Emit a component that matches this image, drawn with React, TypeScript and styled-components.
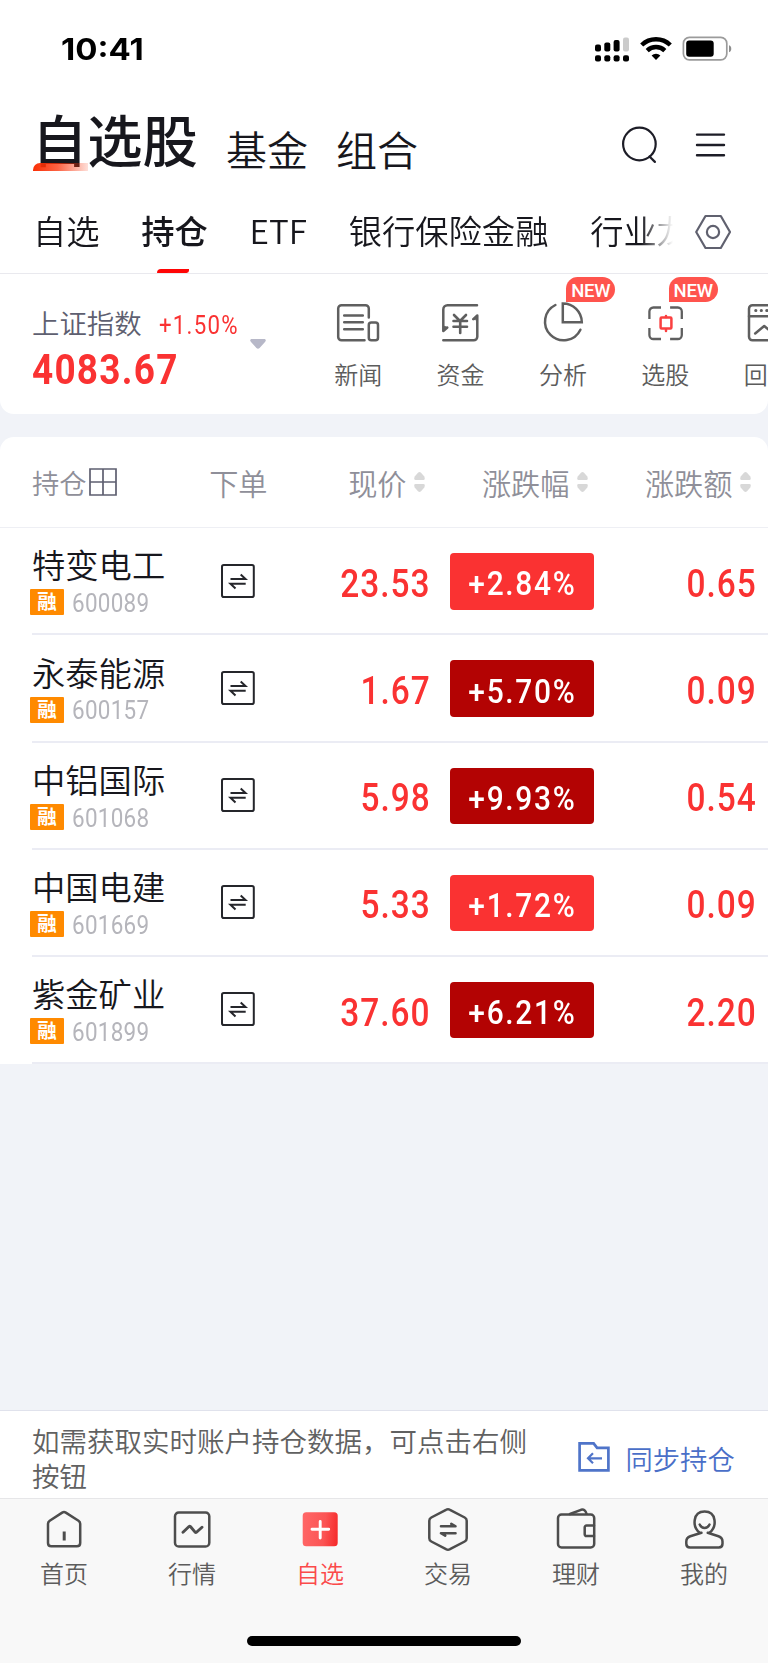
import React from 'react';
import styled, { createGlobalStyle } from 'styled-components';

const CJK = `"Noto Sans CJK SC", sans-serif`;
const DIGITS = `Roboto, "Liberation Sans", sans-serif`;
const RED = '#fa3232';
const DEEP_RED = '#b30303';

const GlobalStyle = createGlobalStyle`
  *, *::before, *::after { box-sizing: border-box; }
  body {
    margin: 0;
    background: #f1f3f8;
    font-family: ${CJK};
    font-weight: 350;
    color: #17171d;
  }
  svg { display: block; flex: none; overflow: visible; }
`;

const Screen = styled.div`
  width: 768px;
  height: 1663px;
  display: flex;
  flex-direction: column;
  overflow: hidden;
  background: #f1f3f8;
`;

/* Condensed figures for prices and percentages */
const Figure = styled.span<{ $size: number; $weight?: number; $color?: string; $align?: 'left' | 'right' | 'center'; $stretch?: number; $gap?: number }>`
  display: inline-block;
  font-family: ${DIGITS};
  font-size: ${p => p.$size}px;
  font-weight: ${p => p.$weight ?? 500};
  color: ${p => p.$color ?? RED};
  line-height: 1;
  white-space: nowrap;
  letter-spacing: ${p => p.$gap ?? 1.4}px;
  margin-right: -${p => p.$gap ?? 1.4}px;
  transform: scaleX(${p => p.$stretch ?? 0.88});
  transform-origin: ${p => p.$align ?? 'left'} center;
`;

const StatusBar = styled.header`
  height: 98px;
  flex: none;
  padding: 0 36px 0 61px;
  display: flex;
  align-items: center;
  justify-content: space-between;
  background: #fff;
`;

const Clock = styled.time`
  font: 700 30px/1 Inter, sans-serif;
  color: #000;
  transform: scaleX(1.1);
  transform-origin: left center;
`;

const StatusIcons = styled.div`
  display: flex;
  align-items: center;
  gap: 11px;
`;

const TitleBar = styled.div`
  height: 95px;
  flex: none;
  padding: 0 43px 4px 32px;
  display: flex;
  align-items: center;
  background: #fff;
`;

const Title = styled.h1`
  position: relative;
  margin: 0;
  font-size: 55.3px;
  line-height: 80px;
  font-weight: 500;
  padding-bottom: 12px;
`;

const TitleMark = styled.i`
  position: absolute;
  left: 1px;
  bottom: 18.5px;
  width: 55px;
  height: 8px;
  border-radius: 7px 0 0 0;
  background: linear-gradient(90deg, #fa2f05 0%, rgba(250, 47, 5, 0.75) 45%, rgba(250, 47, 5, 0.15) 100%);
`;

const SubTitle = styled.span`
  margin-left: 28px;
  font-size: 41px;
  line-height: 60px;
  font-weight: 350;
  padding-top: 8px;
`;

const TitleActions = styled.div`
  margin-left: auto;
  padding-top: 3px;
  display: flex;
  align-items: center;
  gap: 39px;
`;

const TabStrip = styled.nav`
  height: 81px;
  flex: none;
  display: flex;
  align-items: center;
  padding-left: 33px;
  background: #fff;
  border-bottom: 1px solid #e9e9ee;
`;

const TabList = styled.div`
  width: 640px;
  height: 80px;
  overflow: hidden;
  display: flex;
  align-items: center;
  gap: 41.7px;
  mask-image: linear-gradient(90deg, #000 608px, transparent 640px);
`;

const Tab = styled.span<{ $active?: boolean }>`
  position: relative;
  flex: none;
  height: 80px;
  font-size: 33.3px;
  line-height: 74px;
  white-space: nowrap;
  font-weight: ${p => (p.$active ? 500 : 350)};

  &::after {
    content: '';
    display: ${p => (p.$active ? 'block' : 'none')};
    position: absolute;
    left: 16px;
    bottom: 0;
    width: 32px;
    height: 4.5px;
    background: #ff0505;
    border-radius: 5px 0 3px 0;
  }
`;

const Settings = styled.div`
  margin-left: 22px;
  padding-bottom: 3px;
`;

const MarketCard = styled.section`
  height: 140px;
  flex: none;
  display: flex;
  background: #fff;
  border-radius: 0 0 14px 14px;
`;

const IndexBox = styled.div`
  width: 217px;
  padding: 28px 0 0 32px;
`;

const IndexLine = styled.div`
  display: flex;
  align-items: center;
  height: 40px;
  font-size: 27.4px;
  color: #5e5f70;
  white-space: nowrap;

  ${Figure} { margin: 7px 0 0 17.5px; }
`;

const IndexValue = styled.div`
  height: 56px;
  display: flex;
  align-items: center;
`;

const Caret = styled.div`
  width: 90px;
  padding: 65px 0 0 33px;
`;

const Tools = styled.div`
  flex: 1;
  display: flex;
  overflow: hidden;
`;

const Tool = styled.div`
  position: relative;
  flex: none;
  width: 102.4px;
  padding-top: 29px;
  display: flex;
  flex-direction: column;
  align-items: center;
  gap: 13px;
  font-size: 24px;
  line-height: 36px;
  color: #5c5c5c;
`;

const NewBadge = styled.b`
  position: absolute;
  left: 54.5px;
  top: 2.5px;
  width: 49px;
  height: 25.5px;
  border-radius: 12px 13px 13px 0;
  background: #ff544d;
  color: #fff;
  font: 500 18.5px/28px Roboto, sans-serif;
  letter-spacing: -0.2px;
  text-align: center;
`;

const Holdings = styled.section`
  margin-top: 23.3px;
  flex: none;
  background: #fff;
  border-radius: 14px 14px 0 0;
`;

const HeadRow = styled.div`
  height: 91px;
  display: grid;
  grid-template-columns: 194px 80px 157px 163px 163px;
  align-items: center;
  padding-bottom: 1.5px;
  border-bottom: 1px solid #eeeff4;
`;

const HeadCell = styled.span<{ $name?: boolean }>`
  display: flex;
  align-items: center;
  justify-content: ${p => (p.$name ? 'flex-start' : 'flex-end')};
  gap: ${p => (p.$name ? 2 : 7)}px;
  padding-left: ${p => (p.$name ? 32 : 0)}px;
  padding-right: ${p => (p.$name ? 0 : 6.5)}px;
  font-size: ${p => (p.$name ? 27.3 : 29.2)}px;
  color: #8f8f99;
  white-space: nowrap;
`;

const Row = styled.div`
  height: 107.2px;
  display: grid;
  grid-template-columns: 145px 80px 173px 165px 173px;
  align-items: center;
  margin-left: 32px;
  border-bottom: 2px solid #ebecf4;
`;

const Stock = styled.div`
  display: flex;
  flex-direction: column;
  white-space: nowrap;
  padding-bottom: 2px;
`;

const StockName = styled.span`
  font-size: 33.3px;
  line-height: 45px;
  height: 48px;
  font-weight: 350;
  margin-top: -3px;
`;

const StockMeta = styled.div`
  display: flex;
  align-items: center;
  gap: 7.5px;
  height: 26px;
  margin-left: -2px;

  ${Figure} { margin-top: 3px; }
`;

const Margin = styled.span`
  width: 34px;
  height: 26px;
  flex: none;
  border-radius: 1px;
  background: #ff8a00;
  color: #fff;
  font-size: 19.5px;
  line-height: 24px;
  font-weight: 700;
  text-align: center;
`;

const OrderCell = styled.div`
  display: flex;
  justify-content: center;
  padding: 0 0 0.5px 41px;
`;

const PriceCell = styled.div`
  text-align: right;
  padding: 6px 0.5px 0 0;
`;

const Chip = styled.div<{ $deep: boolean }>`
  justify-self: end;
  width: 144px;
  height: 56.5px;
  border-radius: 4px;
  background: ${p => (p.$deep ? DEEP_RED : RED)};
  display: flex;
  align-items: center;
  justify-content: center;
  padding: 4px 2px 0 0;
  margin: 1px 1px 0 0;
`;

const ChangeCell = styled.div`
  text-align: right;
  padding: 6px 12px 0 0;
`;

const SyncBar = styled.section`
  margin-top: auto;
  height: 88px;
  flex: none;
  display: flex;
  align-items: flex-start;
  padding: 12px 0 0 32px;
  background: #fff;
  border-top: 1px solid #e0e2ec;
`;

const SyncText = styled.p`
  margin: 0;
  width: 500px;
  font-size: 27.5px;
  line-height: 34.7px;
  color: #616161;
`;

const SyncLink = styled.a`
  margin: 15px 0 0 45.5px;
  display: flex;
  align-items: center;
  gap: 16px;
  font-size: 27.3px;
  line-height: 40px;
  color: #4a6fc8;
  white-space: nowrap;
`;

const BottomBar = styled.footer`
  height: 165px;
  flex: none;
  background: #f8f8f8;
  border-top: 1px solid #e6e6e8;
  display: flex;
  flex-direction: column;
  justify-content: space-between;
  align-items: center;
  padding-bottom: 17px;
`;

const NavList = styled.nav`
  width: 100%;
  display: flex;
`;

const NavItem = styled.a<{ $active?: boolean }>`
  flex: 1;
  display: flex;
  flex-direction: column;
  align-items: center;
  gap: 4px;
  padding-top: 10px;
  font-size: 24px;
  line-height: 36px;
  color: ${p => (p.$active ? '#fb4a4a' : '#5c5c5c')};
`;

const HomeIndicator = styled.div`
  width: 274px;
  height: 10px;
  border-radius: 5px;
  background: #000;
`;

const Signal = () => (
  <svg width="34" height="25" viewBox="0 0 34 25">
    <rect x="0" y="7.5" width="6" height="7" rx="2" />
    <rect x="9.3" y="5.5" width="6" height="9" rx="2" />
    <rect x="18.6" y="3" width="6" height="11.5" rx="2" />
    <rect x="28" y="0.5" width="6" height="14" rx="2" fill="#cbcbcb" />
    {[0, 9.3, 18.6, 28].map(x => <rect key={x} x={x} y="18.3" width="6" height="6.2" rx="2" />)}
  </svg>
);

const Wifi = () => (
  <svg width="32" height="24" viewBox="0 0 32 24" fill="none" stroke="#000" strokeWidth="4.4">
    <path d="M1.7 8a20.6 20.6 0 0 1 28.600 0" />
    <path d="M7.200 13.600a12.600 12.600 0 0 1 17.600 0" />
    <path d="M16 23l-4.400-4.400a6.200 6.200 0 0 1 8.800 0z" fill="#000" stroke="none" />
  </svg>
);

const Battery = () => (
  <svg width="49" height="24" viewBox="0 0 49 24">
    <rect x="0.4" y="0.4" width="43.400" height="22.400" rx="6" fill="none" stroke="#9b9b9b" strokeWidth="1.700" />
    <rect x="3.200" y="3.500" width="27.500" height="16.200" rx="3" />
    <path d="M46 8.200c3 .8 3 6.200 0 7z" fill="#8d8d8d" />
  </svg>
);

const SearchIcon = () => (
  <svg width="35" height="38" viewBox="0 0 35 38" fill="none" stroke="#1d1d27" strokeWidth="2.200" strokeLinecap="round">
    <circle cx="17.400" cy="18" r="16.300" />
    <path d="M27.500 30.500l5.400 5.400" />
  </svg>
);

const MenuIcon = () => (
  <svg width="29" height="26" viewBox="0 0 29 26" fill="none" stroke="#1d1d27" strokeWidth="2.400" strokeLinecap="round">
    <path d="M1 2.600h27M1 13h27M1 23.200h27" />
  </svg>
);

const SettingsIcon = () => (
  <svg width="36" height="34" viewBox="0 0 36 34" fill="none" stroke="#60616f" strokeWidth="2.200" strokeLinejoin="round">
    <path d="M10.500 1h15.300L35 17l-9.200 16H10.500L1.200 17z" />
    <circle cx="18" cy="17" r="6.100" />
  </svg>
);

const CaretIcon = () => (
  <svg width="16" height="10" viewBox="0 0 16 10">
    <path d="M2 0h12c2 0 2.400 1.600 1 3L9.600 9q-1.600 1.400-3.200 0L1 3C-.4 1.600 0 0 2 0z" fill="#b7b8c8" />
  </svg>
);

const toolSvg = {
  width: 42,
  height: 40,
  viewBox: '0 0 42 40',
  fill: 'none',
  stroke: '#5f5f5f',
  strokeWidth: 2.5,
  strokeLinejoin: 'round' as const,
  strokeLinecap: 'round' as const,
};

const NewsIcon = () => (
  <svg {...toolSvg}>
    <path d="M31.800 14.500V5.500a3.300 3.300 0 0 0-3.300-3.300H4.500A3.300 3.300 0 0 0 1.200 5.500V34A3.300 3.300 0 0 0 4.500 37.300H27.500" />
    <path d="M7.200 12.500h18.600M7.200 19.300h18.600M7.200 26.200h18.600" />
    <rect x="31.800" y="19.500" width="9.200" height="17.800" rx="2.500" />
  </svg>
);

const FundsIcon = () => (
  <svg {...toolSvg}>
    <path d="M37 2.200H7.500A4.200 4.200 0 0 0 3.300 6.400V28l4-3.400" />
    <path d="M3.300 37.300h30.400a3.600 3.600 0 0 0 3.600-3.600V12.500l-4 3.600" />
    <path d="M14 12l6 6 6-6M13.500 18h13.500M13.500 23.700h13.500M20.200 18v12" strokeWidth="2.600" />
    <path d="M3.600 23.500v4.500l3.700-3.400zM37 16.500v-4l-4 3.600z" fill="#5f5f5f" strokeWidth="1" />
  </svg>
);

const AnalysisIcon = () => (
  <svg {...toolSvg}>
    <path d="M13.400 2a18.600 18.600 0 1 0 25 24.700" />
    <path d="M20.800 .6v18.600h19A18.800 18.800 0 0 0 20.800 .6z" strokeLinejoin="miter" />
  </svg>
);

const PickIcon = () => (
  <svg {...toolSvg}>
    <path d="M5.400 16V8.500a4 4 0 0 1 4-4H17M26.100 4.500h7.700a4 4 0 0 1 4 4V16M37.800 25v7a4 4 0 0 1-4 4h-7.700M17 36H9.400a4 4 0 0 1-4-4v-7" strokeLinecap="butt" strokeWidth="2.300" />
    <g stroke="#fa4040"><rect x="16.600" y="14.600" width="10.800" height="11" rx="1" /><path d="M22 13v1M22 26.800v1.200" /></g>
  </svg>
);

const BacktestIcon = () => (
  <svg {...toolSvg}>
    <rect x="2" y="2.200" width="39" height="35.100" rx="3.500" />
    <path d="M2 13.200h39M8.200 30.500l9-7.500 6 5 10-8" />
    <path d="M8.700 7.500h.2M14.200 7.500h.2M19.700 7.500h.2" strokeWidth="3" />
  </svg>
);

const GridIcon = () => (
  <svg width="28" height="28" viewBox="0 0 28 28" fill="none" stroke="#5e5f70" strokeWidth="1.700">
    <path d="M1 1h26v26H1zM14 1v26M1 14h26" />
  </svg>
);

const SortIcon = () => (
  <svg width="11" height="20" viewBox="0 0 11 20" fill="#d8d8d8">
    <path d="M5.500 0Q6.200 0 7 .8L10.300 4.600Q11.600 8 9.400 8H1.600Q-.6 8 .7 4.600L4 .8Q4.800 0 5.500 0z" />
    <path d="M5.500 20Q6.200 20 7 19.200L10.300 15.400Q11.600 12 9.400 12H1.600Q-.6 12 .7 15.400L4 19.200Q4.800 20 5.500 20z" />
  </svg>
);

const OrderIcon = () => (
  <svg width="34" height="34" viewBox="0 0 34 34" fill="none" stroke="#25262b" strokeWidth="2">
    <rect x="1" y="1" width="31.800" height="32" rx="1.800" />
    <path d="M9.500 15h15l-4.800-4.500" />
    <path d="M24.700 19.700H9.500l5 4.700" />
  </svg>
);

const FolderIcon = () => (
  <svg width="32" height="30" viewBox="0 0 32 30" fill="none" stroke="#4f74c9" strokeWidth="2.700">
    <path d="M1.600 .4h14l3.500 4.500h11.300v22.500H1.600z" />
    <path d="M24 15.300H10.500M15 10.300l-5 5 5 5" strokeWidth="2.200" />
  </svg>
);

const navSvg = {
  width: 40,
  height: 42,
  viewBox: '0 0 40 42',
  fill: 'none',
  stroke: '#4d4d4d',
  strokeWidth: 2.5,
  strokeLinejoin: 'round' as const,
  strokeLinecap: 'round' as const,
};

const HomeIcon = () => (
  <svg {...navSvg}>
    <path d="M18.200 3.600q1.800-1 3.600 0L34.500 11.800q1.700 1.200 1.700 3V34q0 3.300-3.300 3.300H7.300Q4 37.300 4 34V14.800q0-1.800 1.700-3z" />
    <path d="M20.200 22.500v9" strokeWidth="3" strokeLinecap="butt" />
  </svg>
);

const QuoteIcon = () => (
  <svg {...navSvg}>
    <rect x="3" y="3.500" width="34.300" height="34" rx="3.800" />
    <path d="M11 23.200l6-5.700q.7-.6 1.400 0l4.700 5.700q.7.600 1.400 0l5.500-5" strokeWidth="2.900" />
  </svg>
);

const WatchIcon = () => (
  <svg {...navSvg} stroke="none">
    <defs>
      <linearGradient id="watch" x1="0" y1="0.45" x2="1" y2="0.55">
        <stop offset="0" stopColor="#ff6666" />
        <stop offset="0.62" stopColor="#fb5454" />
        <stop offset="1" stopColor="#f62c2c" />
      </linearGradient>
    </defs>
    <rect x="2.700" y="3.300" width="35" height="34" rx="3.500" fill="url(#watch)" />
    <path d="M20.200 12.500v16.500M12 20.200h16.700" stroke="#fff" strokeWidth="2.900" />
  </svg>
);

const TradeIcon = () => (
  <svg {...navSvg}>
    <path d="M18 .8q2-1.200 4 0L36.700 8.500q2 1.100 2 3.300V29.200q0 2.200-2 3.300L22 40.200q-2 1.200-4 0L3.300 32.500q-2-1.100-2-3.300V11.800q0-2.200 2-3.300z" />
    <path d="M13 17.300h14.500l-4.200-2.400M27.500 24.200H13l4.200 2.400" strokeWidth="2.600" />
  </svg>
);

const WalletIcon = () => (
  <svg {...navSvg}>
    <rect x="2" y="5.500" width="36.200" height="33" rx="3.500" />
    <path d="M38 16.500h-7.500a1.800 1.800 0 0 0-1.800 1.800v7a1.800 1.800 0 0 0 1.800 1.800H38M14 5l11-4.200q4.200-1.200 5.500 4" />
  </svg>
);

const ProfileIcon = () => (
  <svg {...navSvg}>
    <path d="M17.500 23.800L6.300 27.200Q2.300 28.600 2.300 32.500v2.200Q2.300 38.400 6 38.400H34.800Q38.500 38.400 38.500 34.700v-2.200q0-3.900-4-5.300L23.700 23.800" />
    <path d="M15.800 23.800C8 18 8.500 2.500 20.600 2.500S33.200 18 25.400 23.800" />
    <path d="M15.700 15.500q1.800 3.600 4.900 3.600t4.900-3.600" />
  </svg>
);

const tools = [
  { label: '新闻', icon: <NewsIcon />, fresh: false },
  { label: '资金', icon: <FundsIcon />, fresh: false },
  { label: '分析', icon: <AnalysisIcon />, fresh: true },
  { label: '选股', icon: <PickIcon />, fresh: true },
  { label: '回测', icon: <BacktestIcon />, fresh: false },
];

const stocks = [
  { name: '特变电工', code: '600089', price: '23.53', pct: '+2.84%', change: '0.65', deep: false },
  { name: '永泰能源', code: '600157', price: '1.67', pct: '+5.70%', change: '0.09', deep: true },
  { name: '中铝国际', code: '601068', price: '5.98', pct: '+9.93%', change: '0.54', deep: true },
  { name: '中国电建', code: '601669', price: '5.33', pct: '+1.72%', change: '0.09', deep: false },
  { name: '紫金矿业', code: '601899', price: '37.60', pct: '+6.21%', change: '2.20', deep: true },
];

const navItems = [
  { label: '首页', icon: <HomeIcon /> },
  { label: '行情', icon: <QuoteIcon /> },
  { label: '自选', icon: <WatchIcon />, active: true },
  { label: '交易', icon: <TradeIcon /> },
  { label: '理财', icon: <WalletIcon /> },
  { label: '我的', icon: <ProfileIcon /> },
];

export default function App() {
  return (
    <Screen>
      <GlobalStyle />
      <StatusBar>
        <Clock>10:41</Clock>
        <StatusIcons><Signal /><Wifi /><Battery /></StatusIcons>
      </StatusBar>
      <TitleBar>
        <Title>自选股<TitleMark /></Title>
        <SubTitle>基金</SubTitle>
        <SubTitle>组合</SubTitle>
        <TitleActions><SearchIcon /><MenuIcon /></TitleActions>
      </TitleBar>
      <TabStrip>
        <TabList>
          <Tab>自选</Tab>
          <Tab $active>持仓</Tab>
          <Tab>ETF</Tab>
          <Tab>银行保险金融</Tab>
          <Tab>行业龙头</Tab>
        </TabList>
        <Settings><SettingsIcon /></Settings>
      </TabStrip>
      <MarketCard>
        <IndexBox>
          <IndexLine>上证指数<Figure $size={25.3} $weight={450}>+1.50%</Figure></IndexLine>
          <IndexValue><Figure $size={42} $weight={750}>4083.67</Figure></IndexValue>
        </IndexBox>
        <Caret><CaretIcon /></Caret>
        <Tools>
          {tools.map(t => (
            <Tool key={t.label}>
              {t.icon}
              {t.label}
              {t.fresh && <NewBadge>NEW</NewBadge>}
            </Tool>
          ))}
        </Tools>
      </MarketCard>
      <Holdings>
        <HeadRow>
          <HeadCell $name>持仓<GridIcon /></HeadCell>
          <HeadCell>下单</HeadCell>
          <HeadCell>现价<SortIcon /></HeadCell>
          <HeadCell>涨跌幅<SortIcon /></HeadCell>
          <HeadCell>涨跌额<SortIcon /></HeadCell>
        </HeadRow>
        {stocks.map(s => (
          <Row key={s.code}>
            <Stock>
              <StockName>{s.name}</StockName>
              <StockMeta>
                <Margin>融</Margin>
                <Figure $size={25.5} $weight={400} $color="#b5b5bb" $gap={0.3}>{s.code}</Figure>
              </StockMeta>
            </Stock>
            <OrderCell><OrderIcon /></OrderCell>
            <PriceCell><Figure $size={38} $align="right" $gap={1.1}>{s.price}</Figure></PriceCell>
            <Chip $deep={s.deep}><Figure $size={34} $color="#fff" $align="center" $gap={1.9}>{s.pct}</Figure></Chip>
            <ChangeCell><Figure $size={38} $align="right" $gap={1.1}>{s.change}</Figure></ChangeCell>
          </Row>
        ))}
      </Holdings>
      <SyncBar>
        <SyncText>如需获取实时账户持仓数据，可点击右侧按钮</SyncText>
        <SyncLink><FolderIcon />同步持仓</SyncLink>
      </SyncBar>
      <BottomBar>
        <NavList>
          {navItems.map(n => (
            <NavItem key={n.label} $active={n.active}>{n.icon}{n.label}</NavItem>
          ))}
        </NavList>
        <HomeIndicator />
      </BottomBar>
    </Screen>
  );
}
